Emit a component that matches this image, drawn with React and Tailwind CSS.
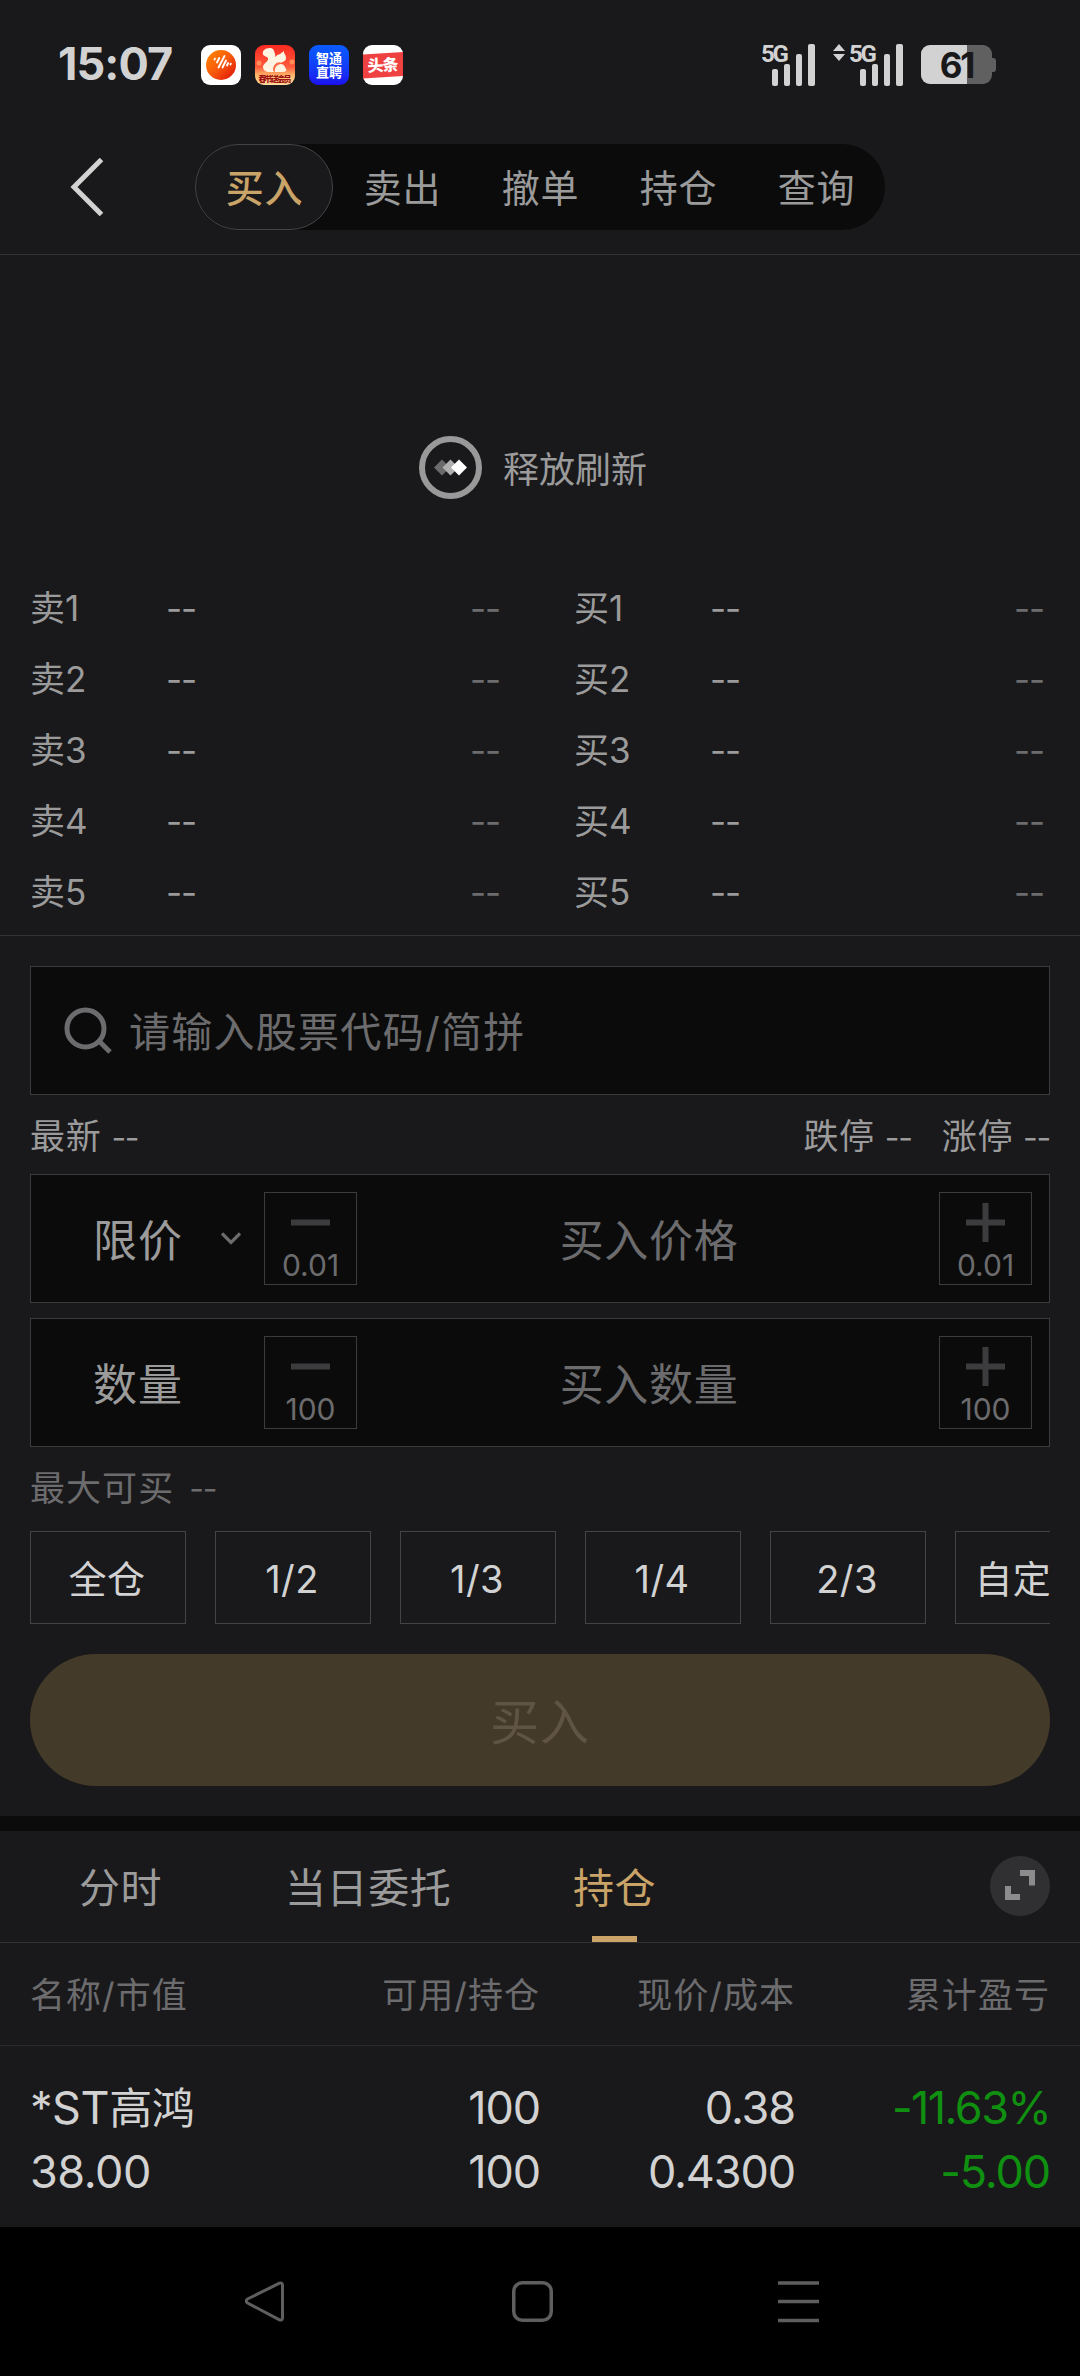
import React from 'react';

const TABS = ['买入', '卖出', '撤单', '持仓', '查询'];
const LEVELS = [1, 2, 3, 4, 5];
const POSITIONS = ['全仓', '1/2', '1/3', '1/4', '2/3', '自定义'];

const Signal = () => (
  <div className="relative h-[42px] w-[56px]">
    <span className="absolute left-0 -top-[4px] text-[24px] leading-[28px] font-bold tracking-[-0.09em] font-['Roboto',sans-serif] text-[#d2d2d2]">5G</span>
    <svg className="block" width="56" height="42" viewBox="0 0 56 42" fill="#d2d2d2">
      <rect x="11" y="25" width="6" height="17" rx="2" />
      <rect x="23" y="20" width="6" height="22" rx="2" />
      <rect x="35" y="10" width="6" height="32" rx="2" />
      <rect x="47" y="0" width="7" height="42" rx="2" />
    </svg>
  </div>
);

const StatusBar = () => (
  <div className="h-[130px] pt-[42px] pl-[58px] pr-[84px] flex items-start justify-between">
    <div className="flex items-start">
      <span className="w-[143px] text-[45px] leading-[44px] font-bold text-[#d2d2d2] tracking-[-0.02em]">15:07</span>
      <div className="flex gap-[14px] pt-[3px]">
        <svg width="40" height="40" viewBox="0 0 40 40">
          <defs>
            <linearGradient id="wave" x1="0" y1="0" x2="1" y2="1">
              <stop offset="0" stopColor="#ff8a00" />
              <stop offset="0.5" stopColor="#f85a0c" />
              <stop offset="1" stopColor="#dd0d08" />
            </linearGradient>
          </defs>
          <rect width="40" height="40" rx="9" fill="#fff" />
          <circle cx="20" cy="20" r="15" fill="url(#wave)" />
          <g stroke="#fff" strokeWidth="1.9" strokeLinecap="round">
            <path d="M13.500 14.500l.4-.8M16 17.500l2.200-4.500M17.500 22.500l6-11.500M21.500 22.500l3.500-7M26 20.500l1.200-2.500M29.500 19.500l.3-.8" />
          </g>
        </svg>
        <svg width="40" height="40" viewBox="0 0 40 40">
          <defs>
            <linearGradient id="squirrel" x1="0" y1="0" x2="0" y2="1">
              <stop offset="0" stopColor="#fb2a20" />
              <stop offset="0.55" stopColor="#ff5a3c" />
              <stop offset="0.75" stopColor="#ffb46a" />
              <stop offset="1" stopColor="#ffe0a0" />
            </linearGradient>
          </defs>
          <rect width="40" height="40" rx="9" fill="url(#squirrel)" />
          <circle cx="4" cy="18" r="2.500" fill="#ff8d55" />
          <circle cx="37" cy="17" r="2.500" fill="#ff8d55" />
          <path d="M15 3c-5 0-8 3-7 6 0 2 3 2 5 4 1 4-5 5-5 9 0 3 3 5 6 5h5c-1-5 2-8 6-9 3-1 6-2 6-5 0-2-1-4-2-5V6l-4 3c-4 1-6 4-6 8 1-2 2-5 1-8-1-4-2-6-5-6z" fill="#fff3e2" />
          <path d="M20 27c-1-4 2-8 6-8 3 0 4 3 5 5s-1 3-3 3z" fill="#fff3e2" />
          <path d="M19 26c-1-5 2-8 6-8" fill="none" stroke="#ff6a45" strokeWidth="1.500" />
          <text x="20" y="37" textAnchor="middle" fontSize="8" fontWeight="900" fill="#9c1010" fontFamily="Noto Sans CJK SC, sans-serif" textLength="33">春节送会员</text>
        </svg>
        <div className="w-[40px] h-[40px] rounded-[9px] bg-gradient-to-b from-[#0a5cff] to-[#1c0cf0] text-white font-bold text-[13px] leading-[14px] flex flex-col items-center justify-center">
          <span>智通</span>
          <span>直聘</span>
        </div>
        <svg width="40" height="40" viewBox="0 0 40 40">
          <rect width="40" height="40" rx="9" fill="#fff" />
          <path d="M0 9.500L40 7V31L0 33.500z" fill="#f04142" />
          <text x="20" y="26" textAnchor="middle" fontSize="16" fontWeight="900" fill="#fff" fontFamily="Noto Sans CJK SC, sans-serif" transform="rotate(-3 20 20)" textLength="31">头条</text>
        </svg>
      </div>
    </div>
    <div className="flex items-start pt-[2px]">
      <Signal />
      <svg className="ml-[16px] mr-[4px]" width="12" height="18" viewBox="0 0 12 18" fill="#d2d2d2">
        <path d="M6 0l6 7H0zM6 17l6-7H0z" />
      </svg>
      <Signal />
      <div className="relative ml-[16px] mt-px w-[75px] h-[40px]">
        <svg className="block" width="75" height="40" viewBox="0 0 75 40">
          <clipPath id="level"><rect width="46" height="40" /></clipPath>
          <path d="M70 13h2a3 3 0 013 3v8a3 3 0 01-3 3h-2z" fill="#606060" />
          <rect width="71" height="39" rx="9" fill="#606060" />
          <rect width="71" height="39" rx="9" fill="#d2d2d2" clipPath="url(#level)" />
        </svg>
        <span className="absolute top-0 left-0 w-[71px] text-center text-[35px] leading-[40px] font-bold tracking-[-0.06em] text-[#19191b]">61</span>
      </div>
    </div>
  </div>
);

const Header = () => (
  <div className="h-[125px] border-b border-[#333335] flex items-start pt-[14px] pl-[70px]">
    <svg className="mt-[14px]" width="34" height="58" viewBox="0 0 34 58" fill="none" stroke="#d2d2d2" strokeWidth="5">
      <path d="M31.500 1.500L4 29l27.500 27.500" />
    </svg>
    <div className="ml-[91px] flex h-[86px] rounded-full bg-[#0b0b0b] text-[38px] tracking-[0.02em] text-[#9b9b9b]">
      {TABS.map((tab, i) => (
        <div
          key={tab}
          className={`w-[138px] h-[86px] pt-[3px] pl-px rounded-full flex items-center justify-center ${i === 0 ? 'bg-[#19191b] border border-[#444446] text-[#c9a367] font-medium' : ''}`}
        >
          {tab}
        </div>
      ))}
    </div>
  </div>
);

const Refresh = () => (
  <div className="h-[316px] pt-[181px] pl-[419px] flex items-start">
    <svg width="63" height="63" viewBox="0 0 63 63">
      <circle cx="31.500" cy="31.500" r="28.500" fill="none" stroke="#999" strokeWidth="6" />
      <path d="M15 31.500l8-8 8 8-8 8z" fill="#6b6b6b" />
      <path d="M23.500 31.500l8-8 8 8-8 8z" fill="#b0b0b0" />
      <path d="M32 31.500l8-8 8 8-8 8z" fill="#fff" />
    </svg>
    <span className="ml-[21px] text-[36px] leading-[69px] text-[#9b9b9b]">释放刷新</span>
  </div>
);

const BookSide = ({ label }) => (
  <div className="w-[544px] shrink-0 pl-[30px]">
    {LEVELS.map(n => (
      <div key={n} className="h-[71px] pt-[4px] flex items-center text-[35px] text-[#9b9b9b]">
        <span className="w-[136px]">{label}{n}</span>
        <span className="w-[304px] tracking-[-0.03em]">--</span>
        <span className="tracking-[-0.03em] text-[#6c6c6e]">--</span>
      </div>
    ))}
  </div>
);

const StepButton = ({ plus, step }) => (
  <div className="w-[93px] h-[93px] shrink-0 border border-[#3c3c3e] flex flex-col items-center pt-[10px] text-[#6c6c6e]">
    <svg className="shrink-0" width="39" height="39" viewBox="0 0 39 39" stroke="#3c3c3e" strokeWidth="6">
      <path d={plus ? 'M0 19.500h39M19.500 0v39' : 'M0 19.500h39'} />
    </svg>
    <span className="text-[30px] leading-[46px]">{step}</span>
  </div>
);

const StepperRow = ({ label, placeholder, step, dropdown }) => (
  <div className="h-[129px] border border-[#3c3c3e] bg-[#0b0b0b] flex items-center pl-[62px] pr-[17px]">
    <span className="w-[128px] pt-[5px] text-[44px] tracking-[0.02em] text-[#9b9b9b]">{label}</span>
    <div className="w-[43px]">
      {dropdown && (
        <svg width="20" height="14" viewBox="0 0 20 14" fill="none" stroke="#6c6c6e" strokeWidth="3.200">
          <path d="M1 1.500l9 9 9-9" />
        </svg>
      )}
    </div>
    <StepButton step={step} />
    <span className="flex-1 pt-[5px] pl-[2px] text-center text-[44px] tracking-[0.015em] text-[#6c6c6e]">{placeholder}</span>
    <StepButton plus step={step} />
  </div>
);

const Quote = ({ label }) => (
  <span>{label}<span className="ml-[10px] text-[32px] tracking-[-0.04em]">--</span></span>
);

const OrderForm = () => (
  <div className="h-[880px] px-[30px] pt-[30px]">
    <div className="h-[129px] border border-[#3c3c3e] bg-[#0b0b0b] flex items-center pl-[33px]">
      <svg width="48" height="48" viewBox="0 0 48 48" fill="none" stroke="#6c6c6e" strokeWidth="5">
        <circle cx="21.500" cy="21.500" r="18.500" />
        <path d="M35 34l11 11" />
      </svg>
      <span className="ml-[17px] pt-[4px] text-[41px] tracking-[0.031em] text-[#6c6c6e]">请输入股票代码/简拼</span>
    </div>
    <div className="h-[79px] pt-[3px] flex items-center gap-[30px] text-[35px] tracking-[0.02em] text-[#9b9b9b]">
      <div className="flex-1"><Quote label="最新" /></div>
      <Quote label="跌停" />
      <Quote label="涨停" />
    </div>
    <StepperRow label="限价" placeholder="买入价格" step="0.01" dropdown />
    <div className="h-[15px]" />
    <StepperRow label="数量" placeholder="买入数量" step="100" />
    <div className="h-[84px] pb-[1px] flex items-center text-[35px] tracking-[0.03em] text-[#6c6c6e]">
      最大可买<span className="ml-[15px] text-[32px] tracking-[-0.04em]">--</span>
    </div>
    <div className="flex gap-[29px] overflow-hidden">
      {POSITIONS.map(p => (
        <div key={p} className="w-[156px] h-[93px] pt-[3px] pr-[2px] shrink-0 border border-[#444446] flex items-center justify-center text-[38px] tracking-[0.01em] text-[#d2d2d2]">
          {p}
        </div>
      ))}
    </div>
    <button className="mt-[30px] pt-[5px] w-full h-[132px] rounded-full bg-[#443a2a] text-[#5f5446] text-[49px] tracking-[0.02em] flex items-center justify-center">
      买入
    </button>
  </div>
);

const Holdings = () => (
  <div className="h-[396px]">
    <div className="h-[112px] border-b border-[#333335] flex items-start pl-[79px] pr-[30px] text-[41px] leading-[115px] tracking-[0.015em] text-[#9b9b9b]">
      <span className="w-[206px]">分时</span>
      <span className="w-[288px]">当日委托</span>
      <div className="relative h-[112px] text-[#c9a367]">
        持仓
        <span className="absolute bottom-px left-[19px] w-[45px] h-[6px] bg-[#c9a367]" />
      </div>
      <svg className="ml-auto mt-[25px]" width="60" height="60" viewBox="0 0 60 60">
        <circle cx="30" cy="30" r="30" fill="#303032" />
        <path d="M30 17h12v12.500M18 30v11h12" fill="none" stroke="#8c8c8c" strokeWidth="6" />
      </svg>
    </div>
    <div className="h-[103px] pt-[3px] border-b border-[#29292b] px-[30px] grid grid-cols-[255px_255px_255px_255px] items-center text-[35px] tracking-[0.03em] text-[#6c6c6e]">
      <span>名称/市值</span>
      <span className="text-right">可用/持仓</span>
      <span className="text-right">现价/成本</span>
      <span className="text-right">累计盈亏</span>
    </div>
    <div className="pt-[30px] px-[30px] grid grid-cols-[255px_255px_255px_255px] text-[45px] leading-[63px] tracking-[-0.025em] text-[#d2d2d2]">
      <span className="tracking-[-0.01em]">*ST<span className="text-[43px]">高鸿</span></span>
      <span className="text-right">100</span>
      <span className="text-right">0.38</span>
      <span className="text-right tracking-[-0.035em] text-[#109010]">-11.63%</span>
      <span className="tracking-[-0.01em]">38.00</span>
      <span className="text-right">100</span>
      <span className="text-right">0.4300</span>
      <span className="text-right text-[#109010]">-5.00</span>
    </div>
  </div>
);

const NavBar = () => (
  <div className="h-[149px] bg-black flex items-start pt-[53px] pl-[244px]">
    <svg width="42" height="42" viewBox="0 0 42 42" fill="none" stroke="#5e5e5e" strokeWidth="3" strokeLinejoin="round">
      <path d="M35.500 3.200L3.500 19q-2.500 2 0 4L35.500 39.800q3 .8 3-2V5.200q0-2.800-3-2z" />
    </svg>
    <svg className="ml-[225px]" width="42" height="43" viewBox="0 0 42 43" fill="none" stroke="#5e5e5e" strokeWidth="3.500">
      <rect x="2.750" y="2.750" width="37.500" height="37.500" rx="8.500" />
    </svg>
    <svg className="ml-[225px]" width="41" height="43" viewBox="0 0 41 43" stroke="#5e5e5e" strokeWidth="3.500">
      <path d="M0 3h41M0 21.500h41M0 40.500h41" />
    </svg>
  </div>
);

export default function App() {
  return (
    <div className="w-[1080px] h-[2376px] overflow-hidden bg-[#19191b] font-['Inter','Noto_Sans_CJK_SC',sans-serif] whitespace-nowrap">
      <StatusBar />
      <Header />
      <Refresh />
      <div className="h-[365px] border-b border-[#333335] flex overflow-hidden">
        <BookSide label="卖" />
        <BookSide label="买" />
      </div>
      <OrderForm />
      <div className="h-[15px] bg-[#0b0b0b]" />
      <Holdings />
      <NavBar />
    </div>
  );
}
